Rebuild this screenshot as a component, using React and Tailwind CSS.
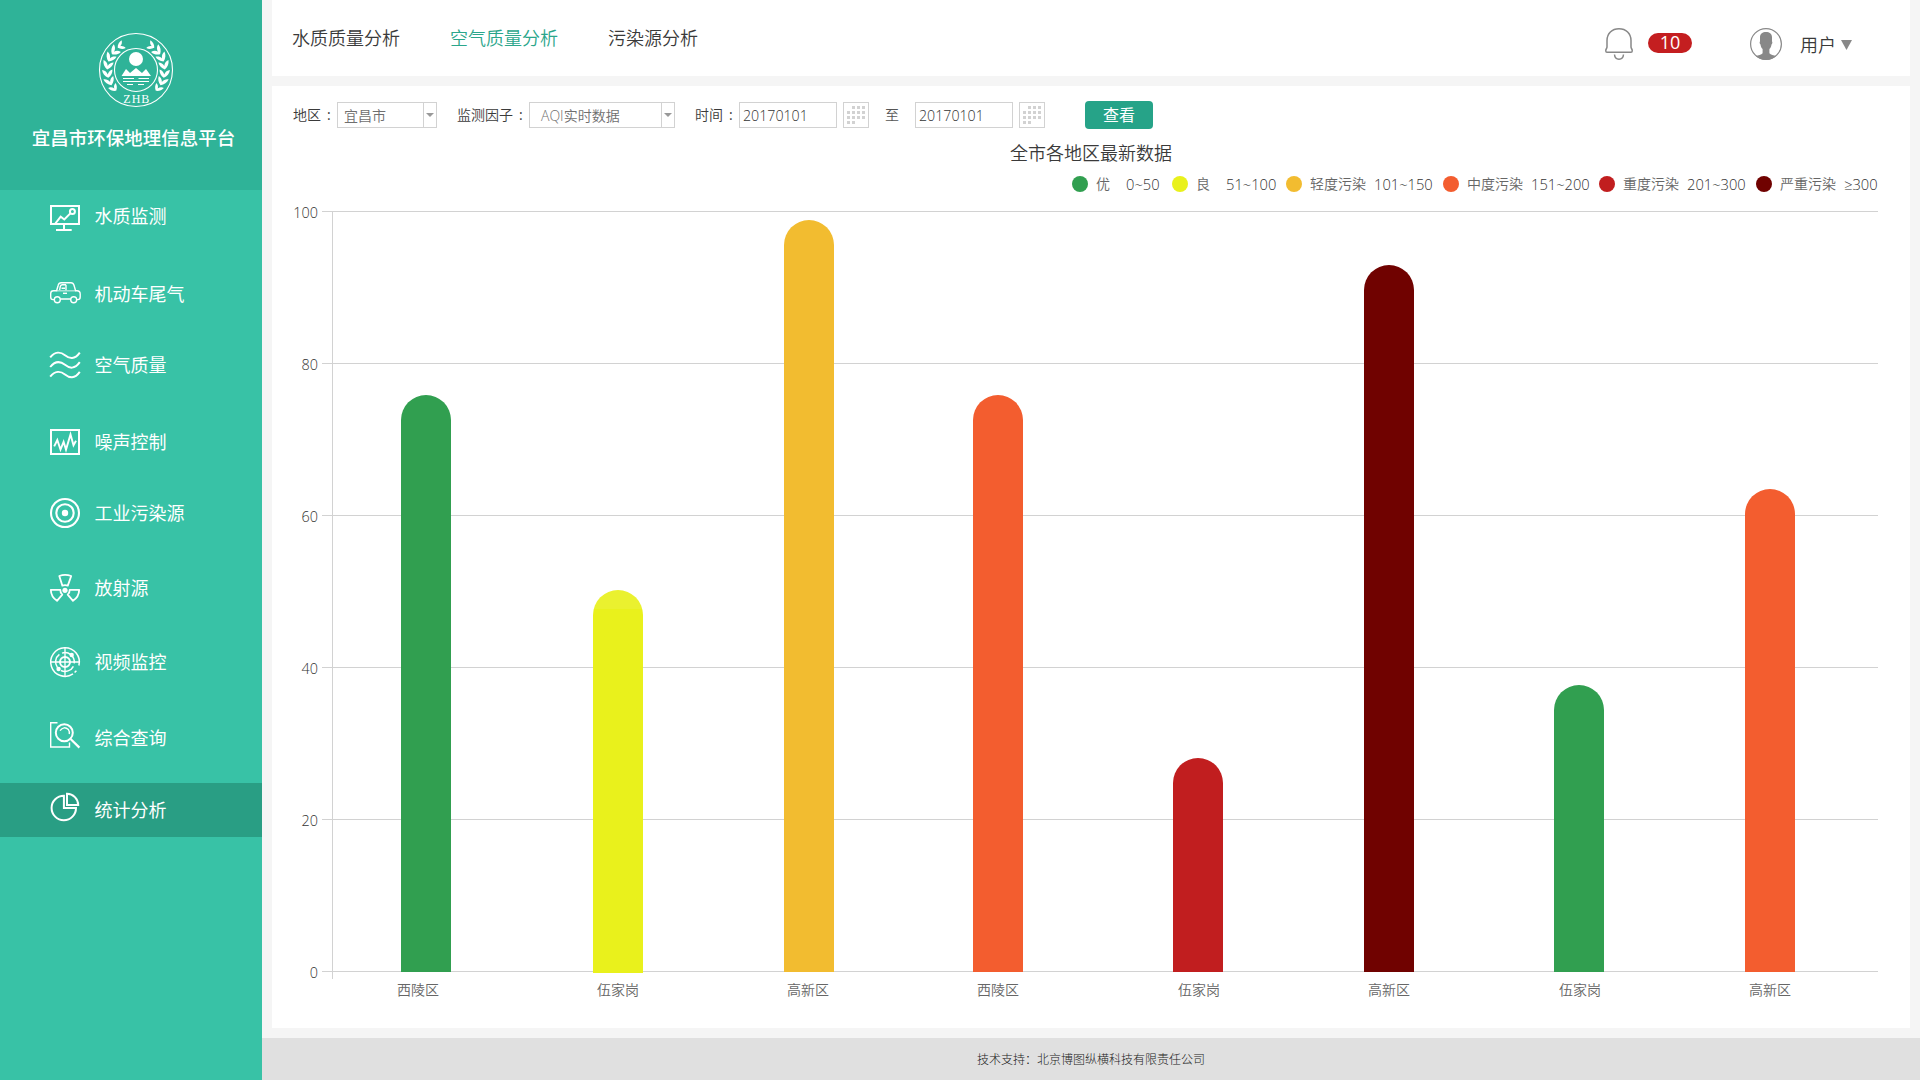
import React from "react";

const SANS = "font-['Open_Sans','Noto_Sans_CJK_SC',sans-serif]";

const MENU = [
  { label: "水质监测", icon: "monitor", cls: "h-[52px]" },
  { label: "机动车尾气", icon: "car", cls: "h-[52px] mt-[26px]" },
  { label: "空气质量", icon: "waves", cls: "h-[52px] mt-[19px]" },
  { label: "噪声控制", icon: "noise", cls: "h-[52px] mt-[25px]" },
  { label: "工业污染源", icon: "target", cls: "h-[52px] mt-[19px]" },
  { label: "放射源", icon: "radiation", cls: "h-[52px] mt-[23px]" },
  { label: "视频监控", icon: "radar", cls: "h-[52px] mt-[22px]" },
  { label: "综合查询", icon: "search", cls: "h-[52px] mt-[24px]" },
  { label: "统计分析", icon: "pie", cls: "h-[54px] mt-[19px] bg-[#299e84]" },
];

const LEGEND = [
  { name: "优", range: "0~50", color: "bg-[#319f50]", w: "w-[100px]", gap: "ml-[16px]" },
  { name: "良", range: "51~100", color: "bg-[#e9f11c]", w: "w-[114px]", gap: "ml-[16px]" },
  { name: "轻度污染", range: "101~150", color: "bg-[#f2bc30]", w: "w-[157px]", gap: "ml-2" },
  { name: "中度污染", range: "151~200", color: "bg-[#f35d2f]", w: "w-[156px]", gap: "ml-2" },
  { name: "重度污染", range: "201~300", color: "bg-[#c11e1f]", w: "w-[157px]", gap: "ml-2" },
  { name: "严重污染", range: "≥300", color: "bg-[#700200]", w: "w-[124px]", gap: "ml-2" },
];

const BARS = [
  { name: "西陵区", bar: "ml-[69px] h-[577px] bg-[#319f50]", text: "ml-[64px]" },
  { name: "伍家岗", bar: "ml-[142px] h-[383px] -mb-px bg-linear-to-b from-[#eaf12f] from-[19px] to-[#e9f11c] to-[19px]", text: "ml-[158px]" },
  { name: "高新区", bar: "ml-[141px] h-[752px] bg-[#f2bc30]", text: "ml-[148px]" },
  { name: "西陵区", bar: "ml-[139px] h-[577px] bg-[#f35d2f]", text: "ml-[148px]" },
  { name: "伍家岗", bar: "ml-[150px] h-[214px] bg-[#c11e1f]", text: "ml-[159px]" },
  { name: "高新区", bar: "ml-[141px] h-[707px] bg-[#700200]", text: "ml-[148px]" },
  { name: "伍家岗", bar: "ml-[140px] h-[287px] bg-[#319f50]", text: "ml-[149px]" },
  { name: "高新区", bar: "ml-[141px] h-[483px] bg-[#f35d2f]", text: "ml-[148px]" },
];

const TICKS = [100, 80, 60, 40, 20, 0];

function MenuIcon({ name }) {
  const shapes = {
    monitor: (
      <g strokeWidth="2">
        <path d="M6 24H2V6H30V24H6L11.7 16.7L15.3 19.5L21.3 13.4" />
        <circle cx="23.4" cy="11.6" r="2.5" />
        <path d="M15 24V30M7 30H22.7" />
      </g>
    ),
    car: (
      <g strokeWidth="1.4">
        <path d="M5.3 21.6H4C2.5 21.6 1.7 20.5 1.7 19V15.5C1.7 13.8 2.8 12.8 4.5 12.8H7.6L9.2 7.2C9.6 5.6 10.6 4.8 12.2 4.8H22C23.6 4.8 24.5 5.6 25 7.2L26.6 12.8H28C30 12.8 31.2 14.2 31.2 16V19C31.2 20.6 30.3 21.6 28.8 21.6H27.9M11.5 21H21.6" />
        <path d="M7.6 12.8H26.6" opacity=".6" />
        <circle cx="8.3" cy="21.7" r="3" />
        <circle cx="24.7" cy="21.7" r="3" />
        <path d="M17 6.8V12.2M10.6 12L11.4 8.2C11.7 7.1 12.2 6.8 13.4 6.8H17M12.5 10.2H16" />
        <path d="M14 15.3H18" />
      </g>
    ),
    waves: (
      <g strokeWidth="2">
        <path d="M1.2 8.4C6 2.4 11.5 2.6 16 6.2S25.5 11 30.8 3.6" />
        <path d="M1.2 18C6 12 11.5 12.2 16 15.8S25.5 20.6 30.8 13.2" />
        <path d="M1.2 27.7C6 21.7 11.5 21.9 16 25.5S25.5 30.3 30.8 22.9" />
      </g>
    ),
    noise: (
      <g strokeWidth="2">
        <rect x="2" y="4" width="28" height="24" />
        <path strokeWidth="1.9" d="M5.2 20.4L8.3 14L11.5 23.6L14.6 15.8L17 23.6L21.5 8.5L24.5 19.3L27 14.8" />
      </g>
    ),
    target: (
      <g strokeWidth="2.1">
        <circle cx="16" cy="16" r="14" />
        <circle cx="16" cy="16" r="8.7" />
        <circle cx="16" cy="16" r="3.2" fill="white" stroke="none" />
      </g>
    ),
    radiation: (
      <g strokeWidth="1.8" strokeLinejoin="round">
        <path d="M10.3 4Q16 1.6 22.2 4L18.8 13.6Q16 12.6 13.3 13.6Z" />
        <path d="M1.8 17.8H11.3Q11.2 20.9 13.3 22.6L8 28.8Q2 25 1.8 17.8Z" />
        <path d="M30.2 17.8H20.7Q20.8 20.9 18.7 22.6L24 28.8Q30 25 30.2 17.8Z" />
        <circle cx="16" cy="18.3" r="2.6" fill="white" stroke="none" />
      </g>
    ),
    radar: (
      <g strokeWidth="1.5">
        <path d="M29.9 19.5A14.3 14.3 0 1 0 24 27.9M25.6 26.6L27.4 24.7" />
        <path d="M13 7.1A9.4 9.4 0 0 1 25.2 17.4M24.4 20.3A9.4 9.4 0 0 1 12 24.5M8.5 21.6A9.4 9.4 0 0 1 10.4 8.4" />
        <circle cx="16" cy="16" r="5" strokeWidth="2" />
        <path d="M16 1.8V30.2M1.8 16H30.2" strokeWidth="1.3" />
        <circle cx="22.7" cy="9" r="2.2" fill="white" stroke="none" />
        <circle cx="9.6" cy="23" r="2.2" fill="white" stroke="none" />
      </g>
    ),
    search: (
      <g strokeWidth="1.4">
        <path d="M8.5 .8H1.7V25H20.5V20.5" />
        <circle cx="15.3" cy="10.7" r="8.5" strokeWidth="2" />
        <path d="M11 8.6Q15 3.6 19.4 7.6Q20.8 9.4 20.2 12" />
        <path d="M21.6 17L30.4 25.6" strokeWidth="2.2" />
      </g>
    ),
    pie: (
      <g strokeWidth="2">
        <path d="M14.9 1.8A12.2 12.2 0 1 0 27 13.9H14.9Z" />
        <path d="M18 -.2V11H29.2A11.3 11.3 0 0 0 18 -.2Z" />
      </g>
    ),
  };
  return (
    <svg viewBox="0 0 32 32" fill="none" stroke="white" className="h-8 w-8 shrink-0 overflow-visible">
      {shapes[name]}
    </svg>
  );
}

function Logo() {
  const leaves = [58, 42, 26, 10, -7, -23, -39];
  const branch = leaves.map((a, i) => (
    <g key={a} transform={`rotate(${-a}) translate(28.5 0)`}>
      <path
        d="M0 4.4C-3 2.6 -5 0 -5.2 -3.4C-2.6 -2.8 -.6 -1.2 0 1C.8 -1.8 2.6 -3.6 5.2 -4.2C5.2 -.6 3.2 2.6 0 4.4Z"
        transform={i === 0 || i === 6 ? "scale(.85)" : undefined}
      />
    </g>
  ));
  return (
    <svg viewBox="-38 -38 76 76" className="h-[76px] w-[76px]" fill="white">
      <circle r="36.5" fill="none" stroke="white" strokeWidth="1.1" />
      <circle r="21.5" fill="none" stroke="white" strokeWidth="1.1" />
      <g>{branch}</g>
      <g transform="scale(-1 1)">{branch}</g>
      <circle cy="-11" r="7" />
      <path d="M-14.5 6L-10 -1L-6 3L0 -2L6 3L10 -1L15 6Z" />
      <path d="M-13 8.5H-2M2.5 8.5H13M-13 11.5H13M-9 14.5H-3M2 14.5H8" stroke="white" strokeWidth="1.1" />
      <text x=".8" y="33" textAnchor="middle" fontSize="12" fontWeight="400" letterSpacing="1" fontFamily="Liberation Serif, serif">ZHB</text>
    </svg>
  );
}

function Select({ value, className, pad }) {
  return (
    <div className={`flex h-[26px] border border-[#d2d2d2] text-[#6f6f6f] ${className}`}>
      <span className={`flex-1 leading-[25px] ${pad}`}>{value}</span>
      <span className="flex w-[13px] items-center justify-center border-l border-[#d2d2d2]">
        <svg viewBox="0 0 8 4" className="h-1 w-2" fill="#999">
          <path d="M0 0H8L4 4Z" />
        </svg>
      </span>
    </div>
  );
}

function DateInput({ className }) {
  return (
    <div className={`flex gap-[6px] ${className ?? ""}`}>
      <div className="h-[26px] w-[98px] border border-[#d2d2d2] pl-[3px] text-[14.2px] leading-[25px] text-[#333]">20170101</div>
      <div className="flex h-[26px] w-[26px] items-center justify-center border border-[#d2d2d2]">
        <svg viewBox="0 0 18 18" className="h-[18px] w-[18px]" fill="#d2d2d2">
          {[[1, 2, 3], [0, 1, 2, 3], [0, 1, 2, 3], [0, 1]].map((cols, r) =>
            cols.map((c) => <rect key={`${r}-${c}`} x={c * 5} y={r * 5} width="3" height="3" />)
          )}
        </svg>
      </div>
    </div>
  );
}

function Label({ children, className }) {
  return (
    <span className={`flex gap-[6px] leading-[26px] text-[#3a3a3a] ${className}`}>
      <span>{children}</span>
      <span className="font-normal">:</span>
    </span>
  );
}

function Sidebar() {
  return (
    <aside className="flex w-[262px] shrink-0 flex-col bg-[#38c2a6] text-white">
      <div className="flex h-[190px] flex-col items-center bg-[#2fb398] pl-[10px] pt-8">
        <Logo />
        <h1 className="mt-[15px] -ml-[5px] text-[18.5px] leading-[30px] font-medium whitespace-nowrap">宜昌市环保地理信息平台</h1>
      </div>
      <nav>
        {MENU.map((m) => (
          <a key={m.label} className={`flex items-center pl-[49px] ${m.cls}`}>
            <MenuIcon name={m.icon} />
            <span className="ml-[13.5px] text-lg leading-7 font-normal">{m.label}</span>
          </a>
        ))}
      </nav>
    </aside>
  );
}

function Header() {
  return (
    <header className="flex h-[76px] bg-white pl-[20px] text-[#3a3a3a]">
      <nav className="flex gap-[50px] pt-[24px] text-lg leading-[28px]">
        <a>水质质量分析</a>
        <a className="text-[#2ba68b]">空气质量分析</a>
        <a>污染源分析</a>
      </nav>
      <div className="ml-auto flex items-start pr-[58px]">
        <svg viewBox="0 0 28 33" className="mt-7 h-[33px] w-7" fill="none" stroke="#888" strokeWidth="1.5">
          <path d="M2 19V12.5C2 5.5 7 .8 14 .8S26 5.5 26 12.5V19C26 20.5 27.2 21 27.2 22.3V23C27.2 24 26.7 24.3 26 24.3H2C1.3 24.3 .8 24 .8 23V22.3C.8 21 2 20.5 2 19Z" />
          <path d="M9.5 26.5C9.7 29.3 11.3 31.2 14 31.2S18.3 29.3 18.5 26.5" />
        </svg>
        <span className="mt-[33px] ml-[15px] h-5 w-11 rounded-full bg-[#c41e20] text-center text-[18px] leading-[19px] font-normal text-white">10</span>
        <svg viewBox="0 0 32 32" className="mt-7 ml-[58px] h-8 w-8" fill="#888">
          <circle cx="16" cy="16" r="15.4" fill="none" stroke="#888" strokeWidth="1.2" />
          <path d="M10 9C10.2 5.8 12.5 4 16 4S21.8 5.8 22 9V13.5C22.6 13.5 22.5 16 21.5 16.5C21.2 18.6 20.5 20 19.4 21V25.3C20.6 27 23.8 27.3 26.3 28Q22 32 16 32T5.7 28C8.2 27.3 11.4 27 12.6 25.3V21C11.5 20 10.8 18.6 10.5 16.5C9.5 16 9.4 13.5 10 13.5Z" />
        </svg>
        <span className="mt-[31px] ml-[18px] text-lg leading-7">用户</span>
        <svg viewBox="0 0 12 10" className="mt-10 ml-[5px] h-[10px] w-[11px]" fill="#888" preserveAspectRatio="none">
          <path d="M0 0H12L6 10Z" />
        </svg>
      </div>
    </header>
  );
}

function Chart() {
  return (
    <div className="flex flex-1 flex-col text-sm">
      <div className="flex h-[781px]">
        <div className="flex w-[46px] flex-col pt-[3px] text-right text-[14.4px] leading-5 text-[#333]">
          {TICKS.map((t) => (
            <span key={t} className="h-[152px] shrink-0 last:h-5">{t}</span>
          ))}
        </div>
        <div className="ml-1 grid h-[781px] w-[1556px] grid-cols-1 grid-rows-1">
          <div className="col-start-1 row-start-1 pt-[11px]">
            {TICKS.map((t) => (
              <div key={t} className="h-[152px] border-t border-[#d2d2d2] last:h-px" />
            ))}
          </div>
          <div className="col-start-1 row-start-1 mt-[11px] mb-[2px] ml-[10px] border-l border-[#d2d2d2]" />
          <div className="col-start-1 row-start-1 ml-[10px] flex h-[772px] items-end">
            {BARS.map((b, i) => (
              <div key={i} className={`w-[50px] shrink-0 rounded-t-full ${b.bar}`} />
            ))}
          </div>
        </div>
      </div>
      <div className="-mt-px flex pl-[61px] leading-5 text-[#666]">
        {BARS.map((b, i) => (
          <span key={i} className={`w-[42px] shrink-0 ${b.text}`}>{b.name}</span>
        ))}
      </div>
    </div>
  );
}

export default function App() {
  return (
    <div className={`flex h-[1080px] w-[1920px] overflow-hidden bg-[#f5f5f5] font-[350] ${SANS}`}>
      <Sidebar />
      <div className="flex flex-1 flex-col">
        <div className="flex flex-1 flex-col gap-[10px] pr-[10px] pb-[10px] pl-[10px]">
          <Header />
          <main className="flex flex-1 flex-col bg-white">
            <div className="flex h-[44px] items-start pt-4 pl-[21px] text-sm">
              <Label className="w-[44px]">地区</Label>
              <Select value="宜昌市" className="w-[100px]" pad="pl-[6px]" />
              <Label className="ml-5 w-[72px]">监测因子</Label>
              <Select value="AQI实时数据" className="w-[146px]" pad="pl-[11px]" />
              <Label className="ml-5 w-[44px]">时间</Label>
              <DateInput />
              <span className="ml-4 leading-[26px] text-[#555]">至</span>
              <DateInput className="ml-4" />
              <button className="-mt-px ml-10 h-7 w-[68px] rounded bg-[#26a388] text-base leading-7 font-normal text-white">查看</button>
            </div>
            <h2 className="h-[44px] pt-[9px] pl-[738px] text-lg leading-[28px] text-[#3a3a3a]">全市各地区最新数据</h2>
            <div className="-mt-px mb-[5px] flex h-[22px] justify-end pr-[30px] text-sm leading-5 text-[#666]">
              {LEGEND.map((l) => (
                <div key={l.name} className={`flex items-center whitespace-nowrap ${l.w}`}>
                  <span className={`h-4 w-4 rounded-full ${l.color}`} />
                  <span className="ml-2">{l.name}</span>
                  <span className={`text-[14.7px] text-[#333] ${l.gap}`}>{l.range}</span>
                </div>
              ))}
            </div>
            <Chart />
          </main>
        </div>
        <footer className="h-[42px] bg-[#e0e0e0] pl-[715px] font-['Liberation_Serif','Noto_Sans_CJK_SC',serif] text-xs leading-[45px] font-light text-[#222]">技术支持：北京博图纵横科技有限责任公司</footer>
      </div>
    </div>
  );
}
